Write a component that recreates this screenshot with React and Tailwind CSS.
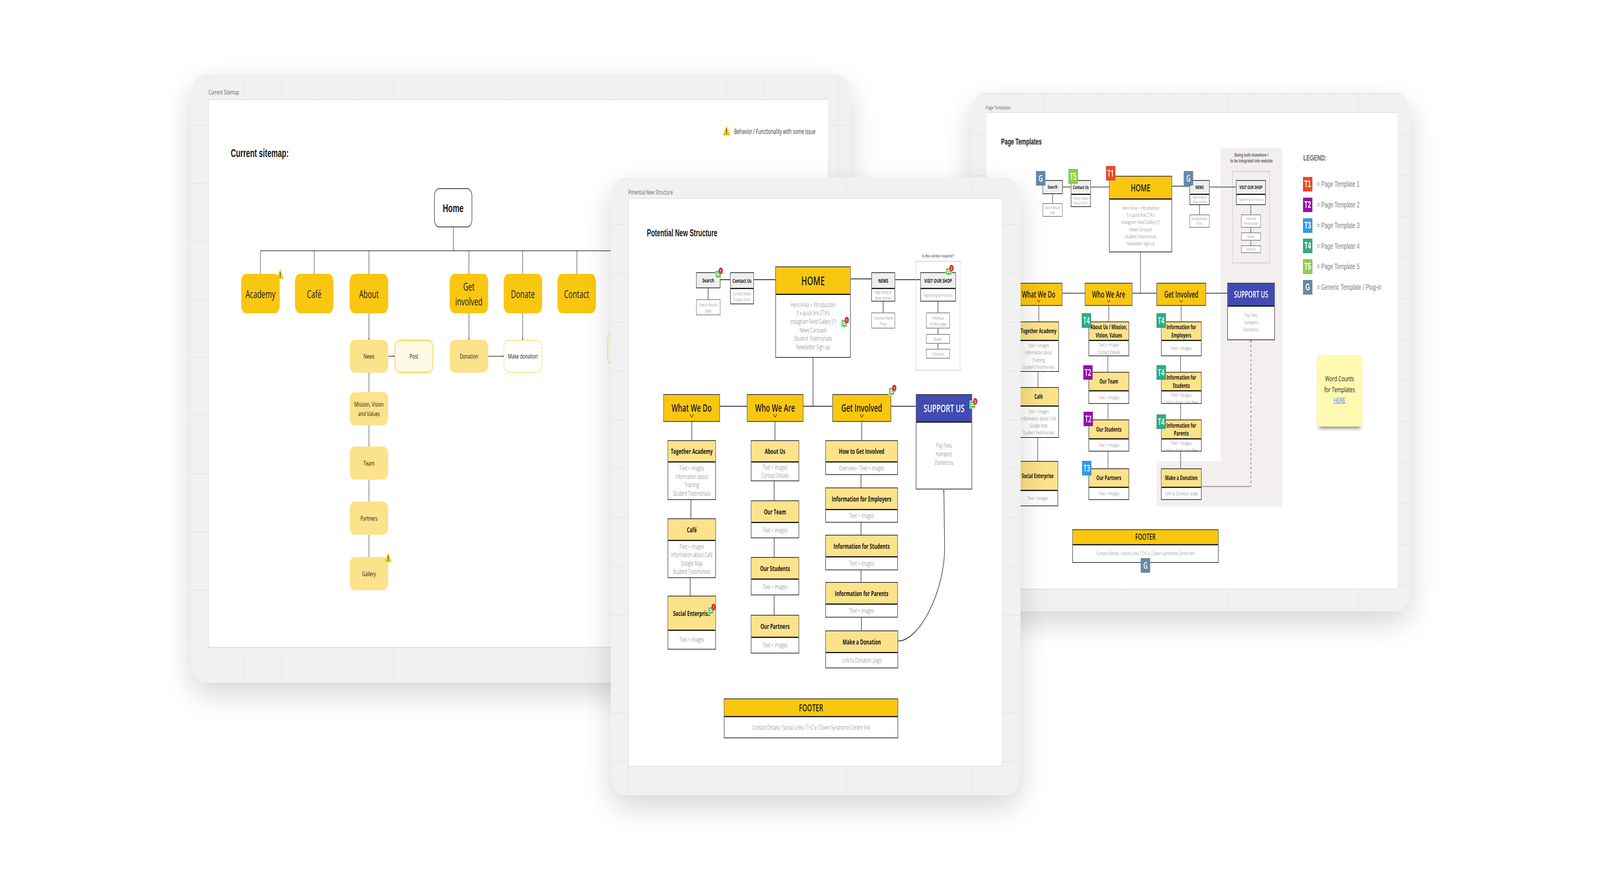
import React from "react";

const yellow = "bg-[#fac710] text-[#1a1a1a]";
const light = "bg-[#fce28a] text-[#1a1a1a]";
const gray = "bg-[#efefef] text-[#1a1a1a]";
const blue = "bg-[#414bb2] text-white";

const boardBase = "absolute rounded-[56px] bg-[#f1f1f1] shadow-[0_30px_90px_rgba(0,0,0,0.16)]";
const paperBase = "absolute bg-white border-2 border-[#e2e2e2]";
const arial = "font-['Liberation_Sans',Arial,sans-serif]";

// page is a free canvas, everything below sits at its place on that canvas
const Label = ({ pos, children }) => (
  <div className={`absolute whitespace-nowrap text-[#666] ${pos}`}>{children}</div>
);

const Title = ({ pos, children }) => (
  <div className={`absolute whitespace-nowrap font-bold text-[#1a1a1a] ${arial} ${pos}`}>{children}</div>
);

const Wires = ({ d, arrows, width = 1.5 }) => (
  <svg viewBox="0 0 6401 2281" className="absolute left-0 top-0 w-[6401px] h-[2281px]" fill="none">
    <path d={d} stroke="#1c1c1c" strokeWidth={width} />
    {arrows && <path d={arrows} fill="#1c1c1c" />}
  </svg>
);

const Pill = ({ pos, cls, lines }) => (
  <div className={`absolute flex flex-col items-center justify-center rounded-[20px] text-center ${pos} ${cls}`}>
    {lines.map((l) => (
      <span key={l}>{l}</span>
    ))}
  </div>
);

const Chevron = ({ cls }) => (
  <svg viewBox="0 0 18 10" className={`absolute left-1/2 -translate-x-1/2 ${cls}`} fill="none">
    <path d="M1.5 1 L9 9 L16.5 1" stroke="#1a1a1a" strokeWidth="1.6" />
  </svg>
);

const Card = ({ pos, head, tone, t, b, title, lines = [], chevron, top }) => (
  <div className={`absolute flex flex-col border-2 border-[#3a3a3a] bg-white ${pos}`}>
    <div className={`relative flex flex-col items-center justify-center text-center ${head} ${tone} ${t} ${lines.length ? "border-b-[3px] border-[#151515]" : ""}`}>
      {[].concat(title).map((l) => (
        <span key={l}>{l}</span>
      ))}
      {chevron && <Chevron cls={chevron} />}
    </div>
    {lines.length > 0 && (
      <div className={`flex min-h-0 flex-1 flex-col items-center overflow-hidden text-center font-light text-[#6e6e6e] ${top ? "justify-start" : "justify-center"} ${b}`}>
        {lines.map((l) => (
          <span key={l} className="whitespace-nowrap">{l}</span>
        ))}
      </div>
    )}
  </div>
);

const Note = ({ pos, b, lines, cls = "border-[#8a8a8a]" }) => (
  <div className={`absolute flex flex-col items-center justify-center border-2 bg-white text-center font-light text-[#6e6e6e] ${cls} ${pos} ${b}`}>
    {lines.map((l) => (
      <span key={l} className="whitespace-nowrap">{l}</span>
    ))}
  </div>
);

const Warning = ({ pos }) => (
  <svg viewBox="0 0 29 25" preserveAspectRatio="none" className={`absolute ${pos}`}>
    <defs>
      <linearGradient id="warn" x1="0" y1="0" x2="0" y2="1">
        <stop offset="0" stopColor="#ffe23f" />
        <stop offset="1" stopColor="#f5c400" />
      </linearGradient>
    </defs>
    <path d="M14.5 0 L16 0.6 L29 23.5 L28 25 H1 L0 23.5 L13 0.6 Z" fill="url(#warn)" />
    <rect x="13.4" y="7" width="2.2" height="10.5" fill="#111" />
    <rect x="13.4" y="19" width="2.2" height="2.6" fill="#111" />
  </svg>
);

const Comment = ({ pos, n }) => (
  <div className={`absolute w-[34px] h-[32px] ${pos}`}>
    <svg viewBox="0 0 34 32" className="absolute left-0 top-0 w-[34px] h-[32px]">
      <path d="M1.5 7.5 H24.5 V26 H15.5 L12.5 29.5 L9.5 26 H1.5 Z" fill="#6cc962" stroke="#fff" strokeWidth="1.6" />
      <rect x="6" y="13.5" width="13" height="2" fill="#fff" />
      <rect x="6" y="18" width="13" height="2" fill="#fff" />
    </svg>
    <span className="absolute left-[15px] top-[0px] flex w-[17px] h-[17px] items-center justify-center rounded-full bg-[#e0262c] text-[10px] font-bold leading-none text-white">
      {n}
    </span>
  </div>
);

const tagColors = {
  T1: "bg-[#f24726]",
  T2: "bg-[#9510ac]",
  T3: "bg-[#2d9bf0]",
  T4: "bg-[#2eab88]",
  T5: "bg-[#8fd14f]",
  G: "bg-[#6589ac]",
};

const Tag = ({ pos = "", name, abs = true }) => (
  <div className={`flex w-[37px] h-[37px] shrink-0 items-center justify-center border border-[#555]/60 text-[23px] font-semibold leading-none text-white ${abs ? "absolute" : ""} ${tagColors[name]} ${pos}`}>
    {name}
  </div>
);

const CurrentBoard = () => (
  <section>
    <div className={`${boardBase} left-[763px] top-[190px] w-[2638px] h-[1558px] bg-[linear-gradient(#e6e6e6_2px,transparent_2px),linear-gradient(90deg,#e6e6e6_2px,transparent_2px)] bg-[size:148.7px_148.7px] bg-[position:64px_130px]`} />
    <div className={`${paperBase} left-[834px] top-[254px] w-[2481px] h-[1404px]`} />
    <Label pos="left-[834px] top-[224px] text-[16px]">Current Sitemap</Label>
    <Title pos="left-[923px] top-[371px] text-[29px]">Current sitemap:</Title>

    <Warning pos="left-[2892px] top-[322px] w-[29px] h-[25px]" />
    <div className="absolute left-[2937px] top-[323px] whitespace-nowrap text-[17.4px] text-[#333]">Behavior / Functionality with some issue</div>

    <Wires
      d="M1813.5 582V642 M1042 642H2480 M1042 642V701 M1257 642V701 M1476 642V701 M1876 642V701 M2091 642V701 M2308 642V701 M1476 802V870 M1876 802V870 M2091 802V870 M1553 912H1579 M1953 912H2015 M1476 954V1426"
      arrows="M1473.5 866L1476 870L1478.5 866Z M1873.5 866L1876 870L1878.5 866Z M2088.5 866L2091 870L2093.5 866Z M1575 909.5L1579 912L1575 914.5Z M2011 909.5L2015 912L2011 914.5Z"
    />

    <Pill pos="left-[1737px] top-[482px] w-[152px] h-[100px]" cls={`border-2 border-[#333] bg-white text-[30px] font-bold text-[#1a1a1a] ${arial}`} lines={["Home"]} />

    {[
      ["left-[965px]", ["Academy"]],
      ["left-[1180px]", ["Café"]],
      ["left-[1399px]", ["About"]],
      ["left-[1799px]", ["Get", "involved"]],
      ["left-[2015px]", ["Donate"]],
      ["left-[2230px]", ["Contact"]],
    ].map(([x, lines]) => (
      <Pill key={x} pos={`${x} top-[701px] w-[154px] h-[101px]`} cls={`${yellow} text-[28px] leading-[38px]`} lines={lines} />
    ))}

    <Pill pos="left-[1399px] top-[870px] w-[154px] h-[84px]" cls={`${light} text-[17px]`} lines={["News"]} />
    <Pill pos="left-[1579px] top-[870px] w-[154px] h-[84px]" cls="border-2 border-[#fac710] bg-[#fef9e6] text-[17px] text-[#1a1a1a]" lines={["Post"]} />
    <Pill pos="left-[1799px] top-[870px] w-[154px] h-[84px]" cls={`${light} text-[17px]`} lines={["Donation"]} />
    <Pill pos="left-[2015px] top-[870px] w-[154px] h-[84px]" cls="border-2 border-dashed border-[#fac710] bg-white text-[17px] text-[#1a1a1a]" lines={["Make donation"]} />
    <Pill pos="left-[2430px] top-[851px] w-[154px] h-[83px]" cls="border-2 border-dashed border-[#fac710]" lines={[]} />

    <Pill pos="left-[1399px] top-[1004px] w-[154px] h-[85px]" cls={`${light} text-[17px] leading-[24px]`} lines={["Mission, Vision", "and Values"]} />
    <Pill pos="left-[1399px] top-[1143px] w-[154px] h-[85px]" cls={`${light} text-[17px]`} lines={["Team"]} />
    <Pill pos="left-[1399px] top-[1284px] w-[154px] h-[85px]" cls={`${light} text-[17px]`} lines={["Partners"]} />
    <Pill pos="left-[1399px] top-[1426px] w-[154px] h-[85px]" cls={`${light} text-[17px]`} lines={["Gallery"]} />

    <Warning pos="left-[1108px] top-[689px] w-[26px] h-[25px]" />
    <Warning pos="left-[1540px] top-[1415px] w-[26px] h-[24px]" />
  </section>
);

// sizes of the middle board
const t2 = "text-[18px] font-bold leading-[24px]";
const b2 = "text-[16px] leading-[21.5px]";
const s2 = "text-[14px] font-bold";
const n2 = "text-[11px] leading-[15px]";
const r2 = "text-[27px] font-semibold";
const chev2 = "bottom-[9px] w-[18px] h-[10px]";

const StructureBoard = () => (
  <section>
    <div className={`${boardBase} left-[2443px] top-[454px] w-[1640px] h-[1582px] bg-[linear-gradient(#e6e6e6_2px,transparent_2px),linear-gradient(90deg,#e6e6e6_2px,transparent_2px)] bg-[size:125px_125px] bg-[position:69px_120px]`} />
    <div className={`${paperBase} left-[2514px] top-[507px] w-[1496px] h-[1456px]`} />
    <Label pos="left-[2514px] top-[480px] text-[16px]">Potential New Structure</Label>
    <Title pos="left-[2588px] top-[578px] text-[25px]">Potential New Structure</Title>

    <Wires
      width={2}
      d="M2833 737V766 M2882 716H2921 M3016 716H3102 M3403 714H3486 M3581 716H3682 M3533 771V800 M3752.5 771V893 M3252.5 916V1040 M2880 1040H2988 M3214 1040H3330 M3565 1040H3664 M2767.5 1080V1127 M3100.5 1080V1127 M3447.5 1080V1127 M2764 1280V1327 M2761 1480V1525 M3097 1232V1281 M3097 1378V1426 M3097 1524V1574 M3444.5 1216V1248 M3444.5 1338V1369 M3444.5 1459V1490 M3446.5 1580V1614 M3593 1641C3680 1641 3781 1510 3779 1400L3776 1255"
      arrows="M3773.5 1259L3776 1253L3778.5 1259Z"
    />

    <div className="absolute left-[3664px] top-[668px] w-[178px] h-[281px] border-2 border-dotted border-[#aaa]" />
    <div className={`absolute left-[3664px] top-[647px] w-[178px] text-center text-[11px] font-bold text-[#777] ${arial}`}>Is this section required?</div>

    <Card pos="left-[2785px] top-[697px] w-[97px] h-[41px]" head="h-full" tone={gray} t={s2} title="Search" />
    <Note pos="left-[2785px] top-[766px] w-[97px] h-[41px]" b={n2} lines={["Search Results", "page"]} />
    <Card pos="left-[2921px] top-[697px] w-[95px] h-[82px]" head="h-[41px]" tone={gray} t={s2} b={n2} title="Contact Us" lines={["Contact Details", "Enquiry Form"]} />
    <Card pos="left-[3102px] top-[682px] w-[301px] h-[234px]" head="h-[71px]" tone={yellow} t="text-[31px] font-semibold" b="text-[16px] leading-[21.6px]" title="HOME" lines={["Hero Area + Introduction", "3 x quick link CTA's", "Instagram Feed Gallery (?)", "News Carousel", "Student Testimonials", "Newsletter Sign-up"]} />
    <Card pos="left-[3486px] top-[697px] w-[95px] h-[75px]" head="h-[41px]" tone={gray} t={s2} b={n2} title="NEWS" lines={["Page listing all", "News articles"]} />
    <Note pos="left-[3486px] top-[800px] w-[95px] h-[41px]" b={n2} lines={["Individual News", "Posts"]} />
    <Card pos="left-[3682px] top-[697px] w-[142px] h-[75px]" head="h-[41px]" tone={gray} t={s2} b={n2} title="VISIT OUR SHOP" lines={["Page listing all Products"]} />
    <Note pos="left-[3705px] top-[800px] w-[95px] h-[41px]" b={n2} lines={["Individual", "Product page"]} />
    <Note pos="left-[3705px] top-[855px] w-[95px] h-[25px]" b={n2} lines={["Basket"]} />
    <Note pos="left-[3705px] top-[893px] w-[95px] h-[25px]" b={n2} lines={["Checkout"]} />

    <Card pos="left-[2654px] top-[1009px] w-[226px] h-[71px]" head="h-full" tone={yellow} t={r2} title="What We Do" chevron={chev2} />
    <Card pos="left-[2988px] top-[1009px] w-[226px] h-[71px]" head="h-full" tone={yellow} t={r2} title="Who We Are" chevron={chev2} />
    <Card pos="left-[3330px] top-[1009px] w-[235px] h-[71px]" head="h-full" tone={yellow} t={r2} title="Get Involved" chevron={chev2} />
    <Card pos="left-[3664px] top-[1009px] w-[225px] h-[244px]" head="h-[71px]" tone={blue} t={r2} b="text-[16px] leading-[22px] pb-[10px]" title="SUPPORT US" lines={["Pay Fees", "Hampers", "Donations"]} />

    <Card pos="left-[2671px] top-[1127px] w-[193px] h-[153px]" head="h-[55px]" tone={light} t={t2} b={b2} title="Together Academy" lines={["Text + images", "Information about", "Training", "Student Testimonials"]} />
    <Card pos="left-[2671px] top-[1327px] w-[193px] h-[153px]" head="h-[56px]" tone={light} t={t2} b={b2} title="Café" lines={["Text + images", "Information about Café", "Google Map", "Student Testimonials"]} />
    <Card pos="left-[2671px] top-[1525px] w-[193px] h-[138px]" head="h-[88px]" tone={light} t={t2} b={b2} title="Social Enterprise" lines={["Text + images"]} />

    <Card pos="left-[3004px] top-[1127px] w-[193px] h-[105px]" head="h-[55px]" tone={light} t={t2} b={b2} title="About Us" lines={["Text + images", "Contact Details"]} />
    <Card pos="left-[3004px] top-[1281px] w-[193px] h-[97px]" head="h-[56px]" tone={light} t={t2} b={b2} title="Our Team" lines={["Text + images"]} />
    <Card pos="left-[3004px] top-[1426px] w-[193px] h-[98px]" head="h-[56px]" tone={light} t={t2} b={b2} title="Our Students" lines={["Text + images"]} />
    <Card pos="left-[3004px] top-[1574px] w-[193px] h-[99px]" head="h-[57px]" tone={light} t={t2} b={b2} title="Our Partners" lines={["Text + images"]} />

    <Card pos="left-[3302px] top-[1127px] w-[290px] h-[89px]" head="h-[55px]" tone={light} t={t2} b={b2} title="How to Get Involved" lines={["Overview – Text + images"]} />
    <Card pos="left-[3302px] top-[1248px] w-[290px] h-[90px]" head="h-[56px]" tone={light} t={t2} b={b2} title="Information for Employers" lines={["Text + images"]} />
    <Card pos="left-[3302px] top-[1369px] w-[290px] h-[91px]" head="h-[56px]" tone={light} t={t2} b={b2} title="Information for Students" lines={["Text + images"]} />
    <Card pos="left-[3302px] top-[1490px] w-[290px] h-[91px]" head="h-[56px]" tone={light} t={t2} b={b2} title="Information for Parents" lines={["Text + images"]} />
    <Card pos="left-[3302px] top-[1614px] w-[291px] h-[97px]" head="h-[56px]" tone={light} t={t2} b={b2} title="Make a Donation" lines={["Link to Donation page"]} />

    <Card pos="left-[2896px] top-[1788px] w-[697px] h-[102px]" head="h-[46px]" tone={yellow} t="text-[25px] font-semibold" b="text-[16px]" title="FOOTER" lines={["Contact Details / Social Links / T+C's / Down Syndrome Centre link"]} />

    <Comment pos="left-[2860px] top-[685px]" n="1" />
    <Comment pos="left-[3364px] top-[811px]" n="1" />
    <Comment pos="left-[3783px] top-[678px]" n="2" />
    <Comment pos="left-[3554px] top-[985px]" n="1" />
    <Comment pos="left-[3878px] top-[1019px]" n="2" />
    <Comment pos="left-[2831px] top-[1546px]" n="1" />
  </section>
);

// same chart at a smaller zoom on the right board
const t3 = "text-[15.3px] font-bold leading-[20.5px]";
const b3 = "text-[13.4px] leading-[18.2px]";
const s3 = "text-[11.6px] font-bold";
const n3 = "text-[9.3px] leading-[12px]";
const r3 = "text-[22.5px] font-semibold";
const chev3 = "bottom-[6px] w-[15px] h-[8px]";

const TemplatesBoard = () => (
  <section>
    <div className={`${boardBase} left-[3885px] top-[237px] w-[1758px] h-[1328px] bg-[linear-gradient(#e6e6e6_2px,transparent_2px),linear-gradient(90deg,#e6e6e6_2px,transparent_2px)] bg-[size:105px_105px] bg-[position:82px_1.5px]`} />
    <div className={`${paperBase} left-[3943px] top-[287px] w-[1651px] h-[1222px]`} />
    <Label pos="left-[3944px] top-[265px] text-[13.5px]">Page Templates</Label>
    <Title pos="left-[4005px] top-[347px] text-[21.5px]">Page Templates</Title>

    <div className="absolute left-[4883px] top-[379px] w-[247px] h-[917px] bg-[#f3efef]" />
    <div className="absolute left-[4627px] top-[1180px] w-[503px] h-[116px] bg-[#f3efef]" />
    <div className={`absolute left-[4883px] top-[390px] w-[247px] text-center text-[12.5px] font-bold leading-[15.4px] text-[#666] ${arial}`}>
      <p>Being built elsewhere /</p>
      <p>to be integrated into website</p>
    </div>
    <div className="absolute left-[4930px] top-[438px] w-[150px] h-[236px] border-2 border-dotted border-[#aaa]" />

    <svg viewBox="0 0 6401 2281" className="absolute left-0 top-0 w-[6401px] h-[2281px]" fill="none">
      <path d="M5004.5 871V1245.5" stroke="#1c1c1c" strokeWidth="1.5" strokeDasharray="6 6" />
      <path d="M4806 1245.5H5004.5" stroke="#1c1c1c" strokeWidth="2" strokeDasharray="3 3" />
      <path d="M5002.5 874L5004.5 870L5006.5 874Z" fill="#1c1c1c" />
    </svg>
    <Wires
      width={1.6}
      d="M4211 496V520 M4251 478.7H4284 M4364 478.7H4437 M4689 476.6H4759 M4839 478.7H4945 M4798.6 524V549 M5004 524V628 M4563 646V750.6 M4250 750.6H4340 M4530 750.6H4627 M4825 750.6H4910 M4156 783V823 M4436 783V823 M4725.6 783V823 M4152.6 951V991 M4151.5 1120V1180 M4432 912V952 M4432.6 1034V1074 M4432.6 1156V1199 M4723 912V952 M4723.6 1034V1074 M4723.6 1156V1199"
    />

    <Card pos="left-[4171px] top-[461px] w-[80px] h-[36px]" head="h-full" tone={gray} t={s3} title="Search" />
    <Note pos="left-[4171px] top-[520px] w-[80px] h-[35px]" b={n3} lines={["Search Results", "page"]} />
    <Card pos="left-[4284px] top-[461px] w-[80px] h-[69px]" head="h-[36px]" tone={gray} t={s3} b={n3} title="Contact Us" lines={["Contact Details", "Enquiry Form"]} />
    <Card pos="left-[4437px] top-[450px] w-[252px] h-[196px]" head="h-[59px]" tone={yellow} t="text-[26px] font-semibold" b="text-[13.4px] leading-[18.3px]" title="HOME" lines={["Hero Area + Introduction", "3 x quick link CTA's", "Instagram Feed Gallery (?)", "News Carousel", "Student Testimonials", "Newsletter Sign-up"]} />
    <Card pos="left-[4759px] top-[461px] w-[80px] h-[64px]" head="h-[36px]" tone={gray} t={s3} b={n3} title="NEWS" lines={["Page listing all", "News articles"]} />
    <Note pos="left-[4759px] top-[549px] w-[80px] h-[34px]" b={n3} lines={["Individual News", "Posts"]} />
    <Card pos="left-[4945px] top-[461px] w-[119px] h-[64px]" head="h-[36px]" tone={gray} t={s3} b={n3} title="VISIT OUR SHOP" lines={["Page listing all Products"]} />
    <Note pos="left-[4965px] top-[549px] w-[79px] h-[34px]" b={n3} lines={["Individual", "Product page"]} />
    <Note pos="left-[4965px] top-[595px] w-[79px] h-[21px]" b={n3} lines={["Basket"]} />
    <Note pos="left-[4965px] top-[628px] w-[79px] h-[20px]" b={n3} lines={["Checkout"]} />

    <Card pos="left-[4060px] top-[724px] w-[190px] h-[59px]" head="h-full" tone={yellow} t={r3} title="What We Do" chevron={chev3} />
    <Card pos="left-[4340px] top-[724px] w-[190px] h-[59px]" head="h-full" tone={yellow} t={r3} title="Who We Are" chevron={chev3} />
    <Card pos="left-[4627px] top-[724px] w-[198px] h-[59px]" head="h-full" tone={yellow} t={r3} title="Get Involved" chevron={chev3} />
    <Card pos="left-[4910px] top-[724px] w-[190px] h-[147px]" head="h-[59px]" tone={blue} t={r3} b="text-[13.4px] leading-[18.6px] pb-[4px]" title="SUPPORT US" lines={["Pay Fees", "Hampers", "Donations"]} />

    <Card pos="left-[4074px] top-[823px] w-[162px] h-[129px]" head="h-[48px]" tone={light} t={t3} b={b3} title="Together Academy" lines={["Text + images", "Information about", "Training", "Student Testimonials"]} />
    <Card pos="left-[4074px] top-[991px] w-[162px] h-[130px]" head="h-[48px]" tone={light} t={t3} b={b3} title="Café" lines={["Text + images", "Information about Café", "Google Map", "Student Testimonials"]} />
    <Card pos="left-[4070px] top-[1180px] w-[163px] h-[116px]" head="h-[75px]" tone={light} t={t3} b={b3} title="Social Enterprise" lines={["Text + images"]} />

    <Card pos="left-[4355px] top-[823px] w-[162px] h-[89px]" head="h-[48px]" tone={light} t={t3} b={b3} title={["About Us / Mission,", "Vision, Values"]} lines={["Text + images", "Contact Details"]} />
    <Card pos="left-[4355px] top-[952px] w-[162px] h-[82px]" head="h-[48px]" tone={light} t={t3} b={b3} title="Our Team" lines={["Text + images"]} />
    <Card pos="left-[4355px] top-[1074px] w-[162px] h-[82px]" head="h-[49px]" tone={light} t={t3} b={b3} title="Our Students" lines={["Text + images"]} />
    <Card pos="left-[4355px] top-[1199px] w-[162px] h-[81px]" head="h-[48px]" tone={light} t={t3} b={b3} title="Our Partners" lines={["Text + images"]} />

    <Card pos="left-[4645px] top-[823px] w-[162px] h-[89px]" head="h-[48px]" tone={light} t={t3} b={b3} title={["Information for", "Employers"]} lines={["Text + images"]} />
    <Card pos="left-[4645px] top-[952px] w-[162px] h-[82px]" head="h-[48px]" tone={light} t={t3} b={b3} top title={["Information for", "Students"]} lines={["Text + images", "Link to shop / pay fees"]} />
    <Card pos="left-[4645px] top-[1074px] w-[162px] h-[82px]" head="h-[49px]" tone={light} t={t3} b={b3} top title={["Information for", "Parents"]} lines={["Text + images", "Link to shop / pay fees"]} />
    <Card pos="left-[4645px] top-[1199px] w-[162px] h-[81px]" head="h-[48px]" tone={light} t={t3} b={b3} title="Make a Donation" lines={["Link to Donation page"]} />

    <Card pos="left-[4290px] top-[1355px] w-[585px] h-[86px]" head="h-[39px]" tone={yellow} t="text-[21px] font-semibold" b="text-[13.4px] pb-[2px]" title="FOOTER" lines={["Contact Details / Social Links / T+C's / Down Syndrome Centre link"]} />

    <Tag name="G" pos="left-[4145px] top-[438px]" />
    <Tag name="T5" pos="left-[4275px] top-[433px]" />
    <Tag name="T1" pos="left-[4425px] top-[425px]" />
    <Tag name="G" pos="left-[4736px] top-[438px]" />
    <Tag name="T4" pos="left-[4328px] top-[802px]" />
    <Tag name="T4" pos="left-[4627px] top-[802px]" />
    <Tag name="T2" pos="left-[4334px] top-[935px]" />
    <Tag name="T4" pos="left-[4627px] top-[935px]" />
    <Tag name="T2" pos="left-[4335px] top-[1054px]" />
    <Tag name="T4" pos="left-[4627px] top-[1061px]" />
    <Tag name="T3" pos="left-[4329px] top-[1180px]" />
    <Tag name="G" pos="left-[4564px] top-[1429px]" />

    <div className={`absolute left-[5214px] top-[389px] text-[20.5px] font-bold text-[#666] ${arial}`}>LEGEND:</div>
    <div className={`absolute left-[5213px] top-[453px] flex flex-col gap-[15.8px] text-[20.5px] text-[#808080] ${arial}`}>
      {[
        ["T1", "= Page Template 1"],
        ["T2", "= Page Template 2"],
        ["T3", "= Page Template 3"],
        ["T4", "= Page Template 4"],
        ["T5", "= Page Template 5"],
        ["G", "= Generic Template / Plug-in"],
      ].map(([name, text]) => (
        <div key={name} className="flex items-center gap-[18px]">
          <Tag name={name} abs={false} />
          <span className="whitespace-nowrap">{text}</span>
        </div>
      ))}
    </div>

    <div className="absolute left-[5268px] top-[909px] flex w-[182px] h-[183px] flex-col items-center justify-center bg-[#fff9b1] pb-[6px] text-[19px] leading-[27.5px] text-[#1a1a1a] shadow-[0_14px_10px_-9px_rgba(0,0,0,0.45)]">
      <span>Word Counts</span>
      <span>for Templates</span>
      <span className="text-[#4a7ff0] underline">HERE</span>
    </div>
  </section>
);

export default function App() {
  // the canvas is 6401x2281, fit it to the window it really gets
  const fit = `scale(${window.innerWidth / 6401}, ${window.innerHeight / 2281})`;
  return (
    <div className="h-screen w-screen overflow-hidden bg-white">
      <main style={{ transform: fit }} className="relative w-[6401px] h-[2281px] origin-top-left overflow-hidden bg-white font-['Open_Sans',sans-serif]">
        <CurrentBoard />
        <TemplatesBoard />
        <StructureBoard />
      </main>
    </div>
  );
}
